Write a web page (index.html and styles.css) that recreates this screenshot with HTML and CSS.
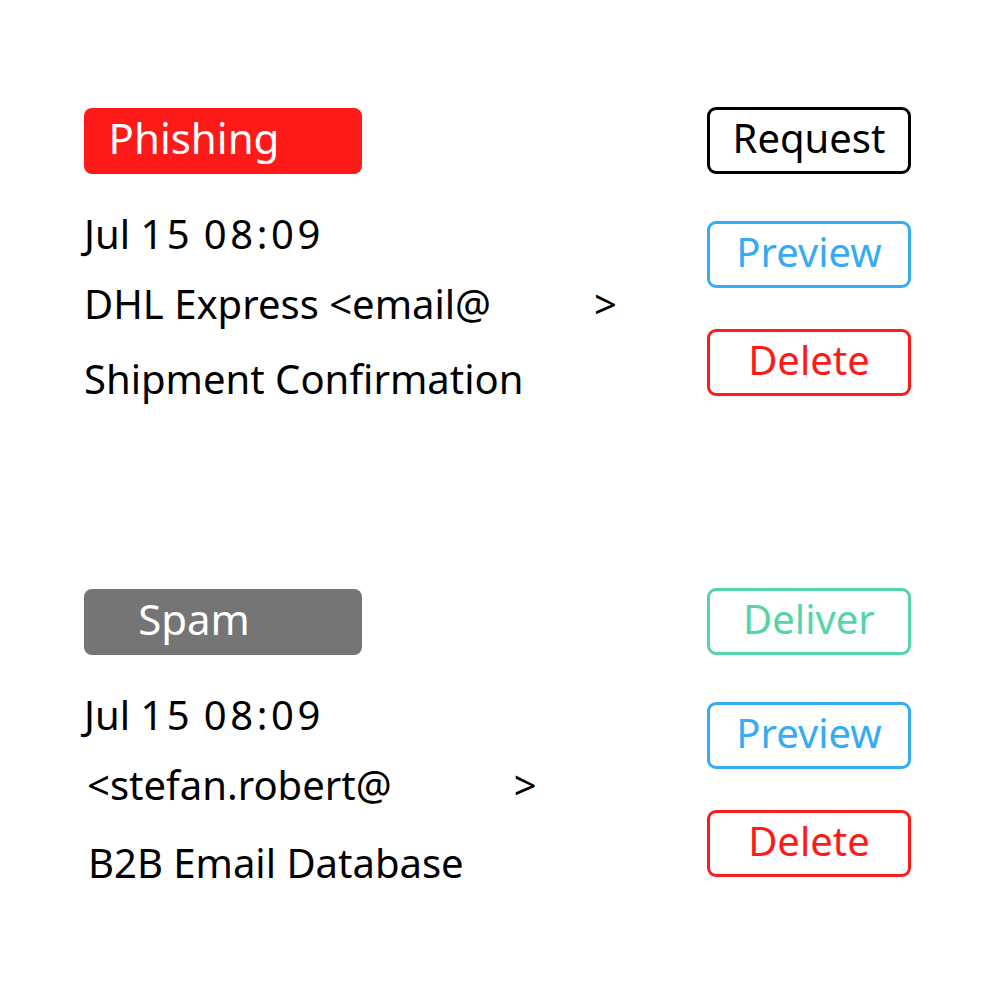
FILE: index.html
```html
<!DOCTYPE html>
<html lang="en">
<head>
<meta charset="utf-8">
<title>Quarantine</title>
<link rel="stylesheet" href="styles.css">
</head>
<body>
<main class="page">
  <section class="card">
    <div class="info">
      <div class="badge badge-phishing">Phishing</div>
      <div class="line line-date">Jul <span class="digits">15</span> <span class="digits">08:09</span></div>
      <div class="line line-from">DHL Express &lt;email@<span class="redacted redacted-1"></span>&gt;</div>
      <div class="line line-subject">Shipment Confirmation</div>
    </div>
    <div class="actions">
      <button class="btn btn-black btn-first">Request</button>
      <button class="btn btn-blue btn-second">Preview</button>
      <button class="btn btn-red">Delete</button>
    </div>
  </section>
  <section class="card card-second">
    <div class="info">
      <div class="badge badge-spam">Spam</div>
      <div class="line line-date">Jul <span class="digits">15</span> <span class="digits">08:09</span></div>
      <div class="line line-from line-from-2">&lt;stefan.robert@<span class="redacted redacted-2"></span>&gt;</div>
      <div class="line line-subject line-subject-2 line-subject-last">B2B Email Database</div>
    </div>
    <div class="actions">
      <button class="btn btn-green btn-first">Deliver</button>
      <button class="btn btn-blue btn-second">Preview</button>
      <button class="btn btn-red">Delete</button>
    </div>
  </section>
</main>
</body>
</html>
```

FILE: styles.css
```css
html, body {
  margin: 0;
  padding: 0;
  background: #ffffff;
}

body {
  font-family: "Noto Sans", "Open Sans", sans-serif;
  color: #000000;
}

.page {
  padding: 107px 0 0 84px;
  width: 827px;
}

.card {
  display: flex;
  justify-content: space-between;
  align-items: flex-start;
}

.card-second {
  margin-top: 184px;
}

.info {
  display: flex;
  flex-direction: column;
}

.badge {
  box-sizing: border-box;
  width: 278px;
  height: 66px;
  margin-top: 1px;
  border-radius: 8px;
  color: #ffffff;
  font-size: 42px;
  line-height: 59px;
  text-align: center;
  padding-right: 58px;
}

.badge-phishing {
  background: #ff1a1a;
}

.badge-spam {
  background: #757575;
}

.line {
  font-size: 40px;
  line-height: 50px;
  white-space: nowrap;
}

.line-date {
  margin-top: 35px;
}

.digits {
  letter-spacing: 3.6px;
}

.line-from {
  margin-top: 20px;
}

.line-subject {
  margin-top: 25px;
}

.line-subject-last {
  margin-top: 28px;
}

.line-from-2 {
  margin-left: 3px;
}

.line-subject-2 {
  margin-left: 4px;
}

.redacted {
  display: inline-block;
}

.redacted-1 {
  width: 103px;
}

.redacted-2 {
  width: 122px;
}

.actions {
  display: flex;
  flex-direction: column;
}

.btn {
  box-sizing: border-box;
  width: 204px;
  height: 67px;
  border: 3px solid #000000;
  border-radius: 9px;
  background: #ffffff;
  font-family: "Noto Sans", "Open Sans", sans-serif;
  font-size: 40px;
  line-height: 54px;
  padding: 0 0 5px 0;
  text-align: center;
}

.btn-first {
  margin-bottom: 47px;
}

.btn-second {
  margin-bottom: 41px;
}

.btn-black {
  border-color: #000000;
  color: #000000;
}

.btn-blue {
  border-color: #36aaf2;
  color: #36aaf2;
}

.btn-red {
  border-color: #ff1a1a;
  color: #ff1a1a;
}

.btn-green {
  border-color: #55d4a6;
  color: #55d4a6;
}
```
